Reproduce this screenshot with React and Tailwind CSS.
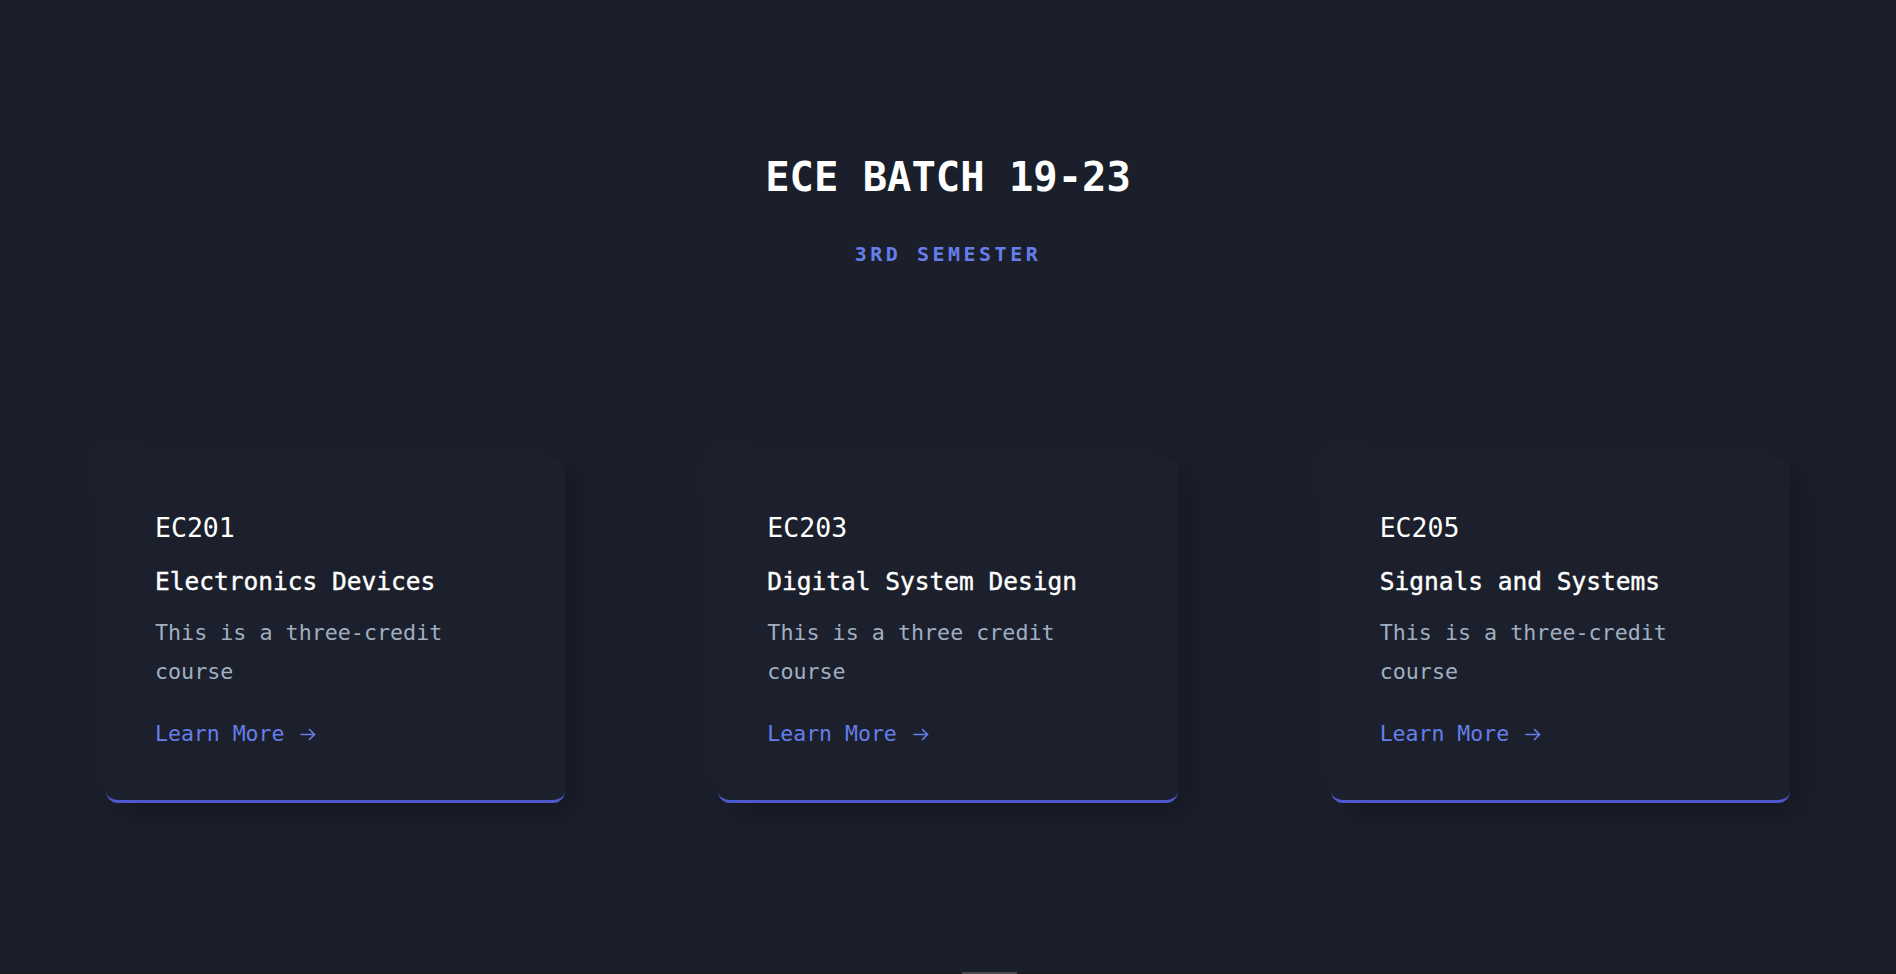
import React from 'react';

const courses = [
    { code: 'EC201', name: 'Electronics Devices', desc: 'This is a three-credit course' },
    { code: 'EC203', name: 'Digital System Design', desc: 'This is a three credit course' },
    { code: 'EC205', name: 'Signals and Systems', desc: 'This is a three-credit course' },
]

function Arrow() {
    return (
        <svg width="16" height="13" viewBox="0 0 16 13" fill="none" stroke="currentColor" strokeWidth="1.6" strokeLinecap="round" strokeLinejoin="round">
            <path d="M1 6.5h13.5" />
            <path d="M9.5 1.5l5 5-5 5" />
        </svg>
    )
}

function CourseCard({ course }) {
    return (
        <div className="flex flex-col rounded-xl bg-[#1b202c] border-b-[3px] border-[#4f57cc] pl-[49px] pr-[49px] pt-[55px] pb-[50px] shadow-[-12px_-12px_28px_rgba(255,255,255,0.018),12px_12px_28px_rgba(0,0,0,0.22)]">
            <h3 className="text-[26.5px] leading-[32px] text-white">{course.code}</h3>
            <h4 className="mt-[22px] text-[24.5px] leading-[32px] text-white [-webkit-text-stroke:0.4px_white]">{course.name}</h4>
            <p className="mt-[16px] text-[21.7px] leading-[38.7px] text-[#a0aec0]">{course.desc}</p>
            <a href="#" className="mt-[27px] flex items-center gap-[16px] text-[21.5px] leading-[32px] text-[#667eea]">
                Learn More
                <Arrow />
            </a>
        </div>
    )
}

export default function App() {
    return (
        <div className="min-h-screen flex flex-col bg-[#1b1f2b] font-['DejaVu_Sans_Mono',monospace]">
            {/* Header */}
            <header className="flex flex-col items-center pt-[153px]">
                <h1 className="text-[40.5px] leading-[48px] font-bold text-white">ECE BATCH 19-23</h1>
                <h2 className="mt-[39px] text-[20px] leading-[28px] font-bold tracking-[3.5px] text-[#667eea]">3RD SEMESTER</h2>
            </header>

            {/* Course cards */}
            <section className="grid grid-cols-3 gap-[153px] px-[106px] mt-[189px]">
                {courses.map(c => (
                    <CourseCard key={c.code} course={c} />
                ))}
            </section>

            <div className="flex-1" />
            <div className="h-[2px] bg-[#1a1b1e] flex">
                <div className="ml-[962px] w-[55px] h-full bg-[#4a4a4a]" />
            </div>
        </div>
    )
}
